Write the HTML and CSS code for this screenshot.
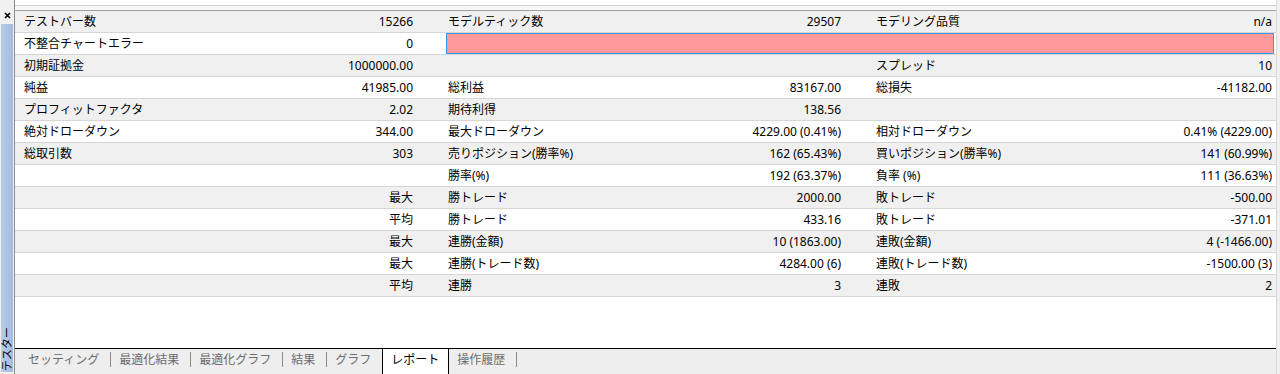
FILE: index.html
```html
<!DOCTYPE HTML>
<html>
    <head>
        <meta charset="utf-8">
        <title>テスター - レポート</title>
        <link rel="stylesheet" href="styles.css">
    </head>
    <body>
        <div class="sidebar">
            <div class="close">
                <svg width="7" height="7" viewBox="0 0 7 7"><path d="M1 1L6 6M6 1L1 6" stroke="#000" stroke-width="1.6"/></svg>
            </div>
            <div class="handle"><span>テスター</span></div>
        </div>

        <div class="panel">
            <div class="top"></div>
            <div class="top-gap"></div>

            <div class="report">
                <div class="row">
                    <div class="lbl first">テストバー数</div><div class="val">15266</div>
                    <div class="lbl">モデルティック数</div><div class="val">29507</div>
                    <div class="lbl">モデリング品質</div><div class="val last">n/a</div>
                </div>
                <div class="row">
                    <div class="lbl first">不整合チャートエラー</div><div class="val">0</div>
                    <div class="alert"></div>
                </div>
                <div class="row">
                    <div class="lbl first">初期証拠金</div><div class="val">1000000.00</div>
                    <div class="lbl"></div><div class="val"></div>
                    <div class="lbl">スプレッド</div><div class="val last">10</div>
                </div>
                <div class="row">
                    <div class="lbl first">純益</div><div class="val">41985.00</div>
                    <div class="lbl">総利益</div><div class="val">83167.00</div>
                    <div class="lbl">総損失</div><div class="val last">-41182.00</div>
                </div>
                <div class="row">
                    <div class="lbl first">プロフィットファクタ</div><div class="val">2.02</div>
                    <div class="lbl">期待利得</div><div class="val">138.56</div>
                    <div class="lbl"></div><div class="val last"></div>
                </div>
                <div class="row">
                    <div class="lbl first">絶対ドローダウン</div><div class="val">344.00</div>
                    <div class="lbl">最大ドローダウン</div><div class="val">4229.00 (0.41%)</div>
                    <div class="lbl">相対ドローダウン</div><div class="val last">0.41% (4229.00)</div>
                </div>
                <div class="row">
                    <div class="lbl first">総取引数</div><div class="val">303</div>
                    <div class="lbl">売りポジション(勝率%)</div><div class="val">162 (65.43%)</div>
                    <div class="lbl">買いポジション(勝率%)</div><div class="val last">141 (60.99%)</div>
                </div>
                <div class="row">
                    <div class="lbl first"></div><div class="val"></div>
                    <div class="lbl">勝率(%)</div><div class="val">192 (63.37%)</div>
                    <div class="lbl">負率 (%)</div><div class="val last">111 (36.63%)</div>
                </div>
                <div class="row">
                    <div class="lbl first"></div><div class="val">最大</div>
                    <div class="lbl">勝トレード</div><div class="val">2000.00</div>
                    <div class="lbl">敗トレード</div><div class="val last">-500.00</div>
                </div>
                <div class="row">
                    <div class="lbl first"></div><div class="val">平均</div>
                    <div class="lbl">勝トレード</div><div class="val">433.16</div>
                    <div class="lbl">敗トレード</div><div class="val last">-371.01</div>
                </div>
                <div class="row">
                    <div class="lbl first"></div><div class="val">最大</div>
                    <div class="lbl">連勝(金額)</div><div class="val">10 (1863.00)</div>
                    <div class="lbl">連敗(金額)</div><div class="val last">4 (-1466.00)</div>
                </div>
                <div class="row">
                    <div class="lbl first"></div><div class="val">最大</div>
                    <div class="lbl">連勝(トレード数)</div><div class="val">4284.00 (6)</div>
                    <div class="lbl">連敗(トレード数)</div><div class="val last">-1500.00 (3)</div>
                </div>
                <div class="row">
                    <div class="lbl first"></div><div class="val">平均</div>
                    <div class="lbl">連勝</div><div class="val">3</div>
                    <div class="lbl">連敗</div><div class="val last">2</div>
                </div>
            </div>

            <div class="blank"></div>

            <div class="tabs">
                <div class="tab">セッティング</div>
                <div class="tab">最適化結果</div>
                <div class="tab">最適化グラフ</div>
                <div class="tab">結果</div>
                <div class="tab pre">グラフ</div>
                <div class="tab active">レポート</div>
                <div class="tab">操作履歴</div>
            </div>
        </div>
    </body>
</html>
```

FILE: styles.css
```css
html, body {
    margin: 0;
    padding: 0;
}
body {
    display: flex;
    height: 374px;
    overflow: hidden;
    background-color: #f0f0f0;
    font-family: "Noto Sans", "Noto Sans CJK JP", sans-serif;
    font-size: 12px;
    color: #000;
}
.sidebar {
    width: 14px;
    border-right: 1px solid #8c8c8c;
    display: flex;
    flex-direction: column;
    align-items: center;
}
.close {
    height: 24px;
    padding-top: 12px;
    box-sizing: border-box;
    line-height: 0;
}
.handle {
    flex: 1;
    width: 12px;
    margin-bottom: 2px;
    background: linear-gradient(to right, #b8cdea, #a2bbdf);
    display: flex;
    align-items: flex-end;
    justify-content: center;
}
.handle span {
    writing-mode: vertical-rl;
    text-orientation: sideways;
    transform: rotate(180deg);
    font-size: 11px;
    line-height: 12px;
    margin-bottom: 1px;
}
.panel {
    flex: 1;
    margin-right: 3px;
    border-right: 1px solid #d8d8d8;
    display: flex;
    flex-direction: column;
    background-color: #fff;
}
.top {
    height: 5px;
    border-bottom: 1px solid #cfcfcf;
}
.top-gap {
    height: 4px;
    background-color: #f7f7f7;
}
.report {
    border-top: 1px solid #a0a0a0;
}
.row {
    display: grid;
    grid-template-columns: 215px 216px 214px 214px 214px 1fr;
    height: 21px;
    line-height: 21px;
    border-bottom: 1px solid #d6d6d6;
    background-color: #fff;
    white-space: nowrap;
}
.row:nth-child(odd) {
    background-color: #f0f0f0;
}
.lbl {
    padding-left: 2px;
}
.lbl.first {
    padding-left: 9px;
}
.val {
    text-align: right;
    padding-right: 33px;
}
.val.last {
    padding-right: 4px;
}
.alert {
    grid-column: 3 / 7;
    margin-right: 2px;
    background-color: #ff9999;
    border: 1px solid #3a97f0;
}
.blank {
    flex: 1;
}
.tabs {
    height: 25px;
    border-top: 1px solid #000;
    background-color: #eeeeee;
    display: flex;
    align-items: flex-start;
    padding-left: 5px;
}
.tab {
    margin-top: 3px;
    height: 15px;
    line-height: 15px;
    padding: 0 11px 0 8px;
    border-right: 1px solid #8a8a8a;
    color: #6d6d6d;
    white-space: nowrap;
}
.tab.pre {
    border-right: none;
    padding-right: 10px;
}
.tab.active {
    margin-top: 0;
    margin-left: 1px;
    height: 25px;
    line-height: 21px;
    padding: 0 9px 0 8px;
    border-right: 1px solid #000;
    border-left: 1px solid #000;
    background-color: #fff;
    color: #000;
}
```
